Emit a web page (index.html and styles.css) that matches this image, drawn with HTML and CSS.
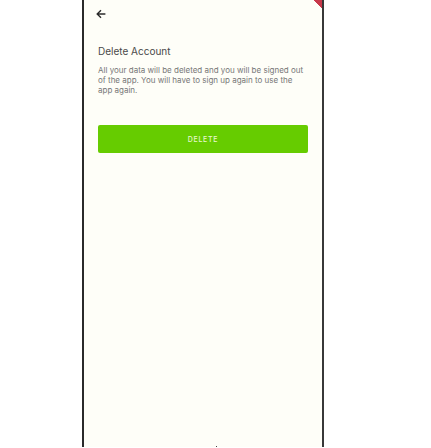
FILE: index.html
```html
<!DOCTYPE html>
<html lang="en">
<head>
    <meta charset="UTF-8">
    <meta name="viewport" content="width=device-width, initial-scale=1.0">
    <title>Delete Account</title>
    <link rel="stylesheet" href="styles.css">
</head>
<body>
    <div class="phone">
        <span class="corner"></span>
        <div class="top-bar">
            <svg class="back-icon" width="10" height="10" viewBox="0 0 10 10" fill="none" stroke="#2b2b2b" stroke-width="1.4">
                <path d="M9.4 5H1.5M5 1.2L1.2 5L5 8.8"/>
            </svg>
        </div>
        <h1>Delete Account</h1>
        <p class="info">All your data will be deleted and you will be signed out of the app. You will have to sign up again to use the app again.</p>
        <button class="delete-btn">DELETE</button>
        <span class="tick"></span>
    </div>
</body>
</html>
```

FILE: styles.css
```css
html, body {
    height: 100%;
}
body {
    margin: 0;
    background-color: #fff;
    font-family: Inter, 'Noto Sans', sans-serif;
    overflow: hidden;
}
.phone {
    position: relative;
    box-sizing: border-box;
    width: 242px;
    height: 447px;
    margin-left: 82px;
    padding: 0 14px;
    background-color: #fefef8;
    border-left: 2px solid #2a2a2a;
    border-right: 2px solid #383838;
}
.corner {
    position: absolute;
    top: 0;
    right: 0;
    width: 8px;
    height: 8px;
    background: linear-gradient(to top right, transparent 50%, #c8394b 50%);
}
.tick {
    position: absolute;
    left: 132px;
    bottom: 0;
    width: 1px;
    height: 1px;
    background-color: #444;
}
.top-bar {
    height: 44px;
}
.back-icon {
    display: block;
    position: relative;
    top: 9px;
    left: -2px;
}
h1 {
    margin: 0 0 7px;
    font-size: 10px;
    line-height: 14px;
    font-weight: 400;
    color: #4a4a4a;
}
.info {
    margin: 0 0 30px;
    font-size: 8px;
    line-height: 10px;
    color: #777;
}
.delete-btn {
    display: block;
    width: 100%;
    height: 28px;
    padding: 0;
    border: none;
    border-radius: 2px;
    background-color: #66cc00;
    color: #e6f7cf;
    font-family: inherit;
    font-size: 7px;
    font-weight: 500;
    letter-spacing: 0.7px;
}
```
